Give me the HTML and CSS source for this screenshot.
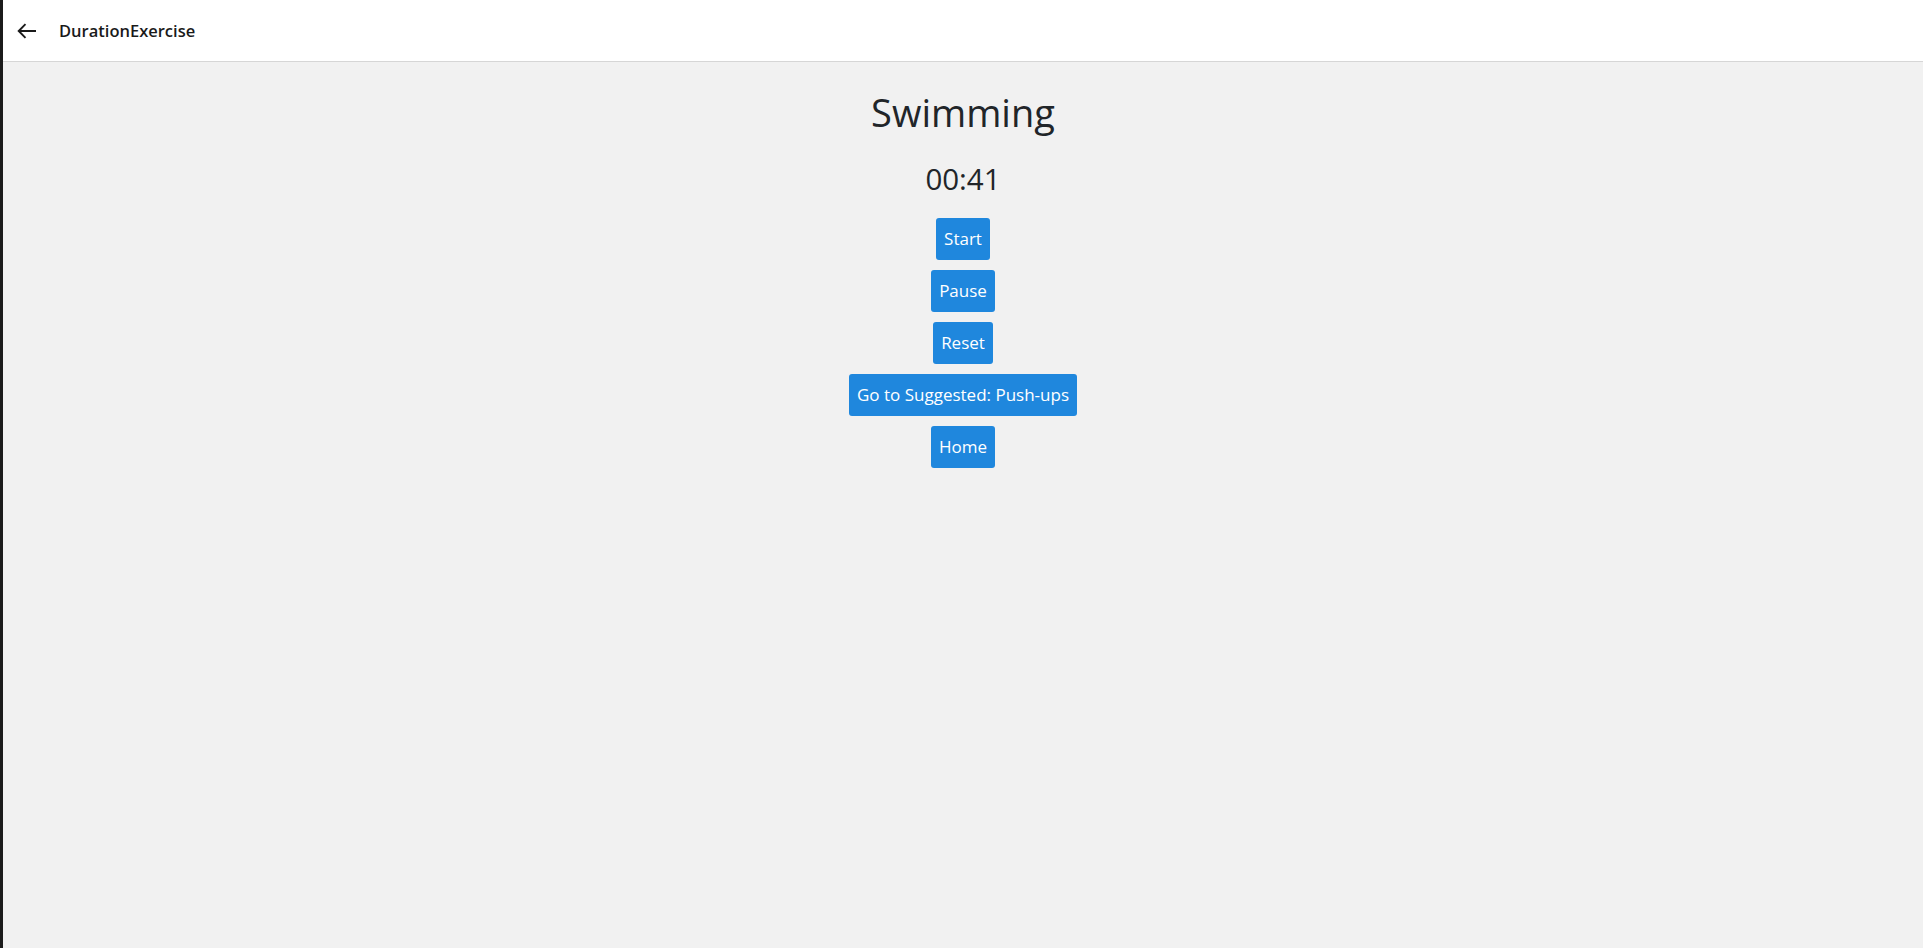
FILE: index.html
```html
<!DOCTYPE html>
<html lang="en">
<head>
<meta charset="utf-8">
<title>DurationExercise</title>
<link rel="stylesheet" href="styles.css">
</head>
<body>
<div class="window">
  <header class="titlebar">
    <button class="back" aria-label="Back">
      <svg width="20" height="16" viewBox="0 0 20 16"><path d="M8.5 1.2 L1.7 8 L8.5 14.8 M1.7 8 H19" fill="none" stroke="#1a1a1a" stroke-width="1.9" stroke-linejoin="miter"/></svg>
    </button>
    <span class="apptitle">DurationExercise</span>
  </header>
  <main class="content">
    <h1 class="title">Swimming</h1>
    <h2 class="timer">00:41</h2>
    <div class="actions">
      <button class="btn">Start</button>
      <button class="btn">Pause</button>
      <button class="btn">Reset</button>
      <button class="btn">Go to Suggested: Push-ups</button>
      <button class="btn">Home</button>
    </div>
  </main>
</div>
</body>
</html>
```
FILE: styles.css
```css
html, body {
  margin: 0;
  padding: 0;
  height: 100%;
}
body {
  font-family: "Open Sans", "Noto Sans", sans-serif;
  background: #1b1b1b;
}
.window {
  margin-left: 3px;
  height: 100%;
  display: flex;
  flex-direction: column;
  background: #f1f1f1;
}
.titlebar {
  height: 61px;
  flex: none;
  background: #ffffff;
  border-bottom: 1px solid #d6d6d6;
  display: flex;
  align-items: center;
}
.back {
  border: 0;
  background: transparent;
  padding: 0;
  margin-left: 14px;
  width: 20px;
  height: 16px;
  display: flex;
}
.apptitle {
  margin-left: 22px;
  font-size: 16.5px;
  font-weight: 600;
  color: #1a1a1a;
}
.content {
  flex: 1;
  display: flex;
  flex-direction: column;
  align-items: center;
  padding-top: 26px;
}
.title {
  margin: 0;
  font-size: 38px;
  font-weight: 400;
  line-height: 48px;
  color: #212529;
}
.timer {
  margin: 24px 0 0;
  font-size: 29.5px;
  font-weight: 400;
  line-height: 38px;
  color: #212529;
}
.actions {
  margin-top: 20px;
  display: flex;
  flex-direction: column;
  align-items: center;
  gap: 10px;
}
.btn {
  font-family: "Open Sans", "Noto Sans", sans-serif;
  font-size: 17px;
  line-height: 24px;
  height: 42px;
  padding: 0 8px;
  border: 0;
  border-radius: 3px;
  background: #1f87dd;
  color: #ffffff;
}
```
